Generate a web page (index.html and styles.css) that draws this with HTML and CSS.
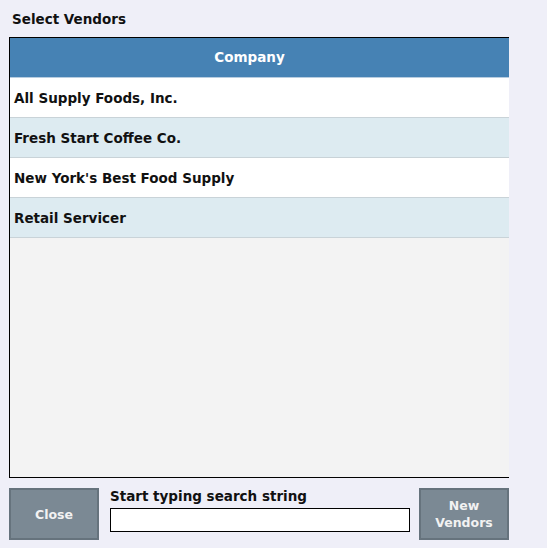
FILE: index.html
```html
<!DOCTYPE html>
<html>
<head>
<meta charset="utf-8">
<link rel="stylesheet" href="styles.css">
</head>
<body>
<div class="dialog">
  <div class="title">Select Vendors</div>
  <div class="grid">
    <div class="grid-head">Company</div>
    <div class="row">All Supply Foods, Inc.</div>
    <div class="row alt">Fresh Start Coffee Co.</div>
    <div class="row">New York's Best Food Supply</div>
    <div class="row alt">Retail Servicer</div>
  </div>
  <div class="footer">
    <button class="btn">Close</button>
    <div class="search">
      <label class="search-label">Start typing search string</label>
      <input class="search-input" type="text">
    </div>
    <button class="btn">New<br>Vendors</button>
  </div>
</div>
</body>
</html>
```
FILE: styles.css
```css
html, body {
  margin: 0;
  padding: 0;
  background: #efeff8;
  font-family: "DejaVu Sans", Verdana, sans-serif;
  font-weight: bold;
  color: #111;
}
.dialog {
  width: 500px;
  padding: 0 0 0 9px;
}
.title {
  font-size: 13.5px;
  height: 37px;
  line-height: 39px;
  padding-left: 3px;
}
.grid {
  height: 439px;
  border-top: 1px solid #000;
  border-left: 1px solid #000;
  border-bottom: 1px solid #000;
  background: #f3f3f3;
}
.grid-head {
  height: 39px;
  line-height: 39px;
  background: #4682b4;
  color: #fff;
  text-align: center;
  font-size: 13.5px;
  padding-right: 20px;
  border-bottom: 1px solid #b8cde0;
}
.row {
  height: 39px;
  line-height: 40px;
  background: #fff;
  border-bottom: 1px solid #c9d3d8;
  padding-left: 4px;
  font-size: 13.5px;
}
.row.alt {
  background: #ddebf1;
}
.footer {
  display: flex;
  align-items: flex-start;
  margin-top: 10px;
}
.btn {
  width: 90px;
  height: 52px;
  background: #7b8994;
  border: 2px solid #66737d;
  color: #f2f2f2;
  font-family: "DejaVu Sans", Verdana, sans-serif;
  font-weight: bold;
  font-size: 12.5px;
  line-height: 17px;
  padding: 0;
}
.search {
  width: 300px;
  margin: 0 9px 0 11px;
  display: flex;
  flex-direction: column;
}
.search-label {
  font-size: 13.5px;
  height: 20px;
  line-height: 17px;
}
.search-input {
  box-sizing: border-box;
  width: 300px;
  height: 24px;
  border: 1px solid #000;
  background: #fff;
  margin: 0;
  padding: 0 4px;
}
```
